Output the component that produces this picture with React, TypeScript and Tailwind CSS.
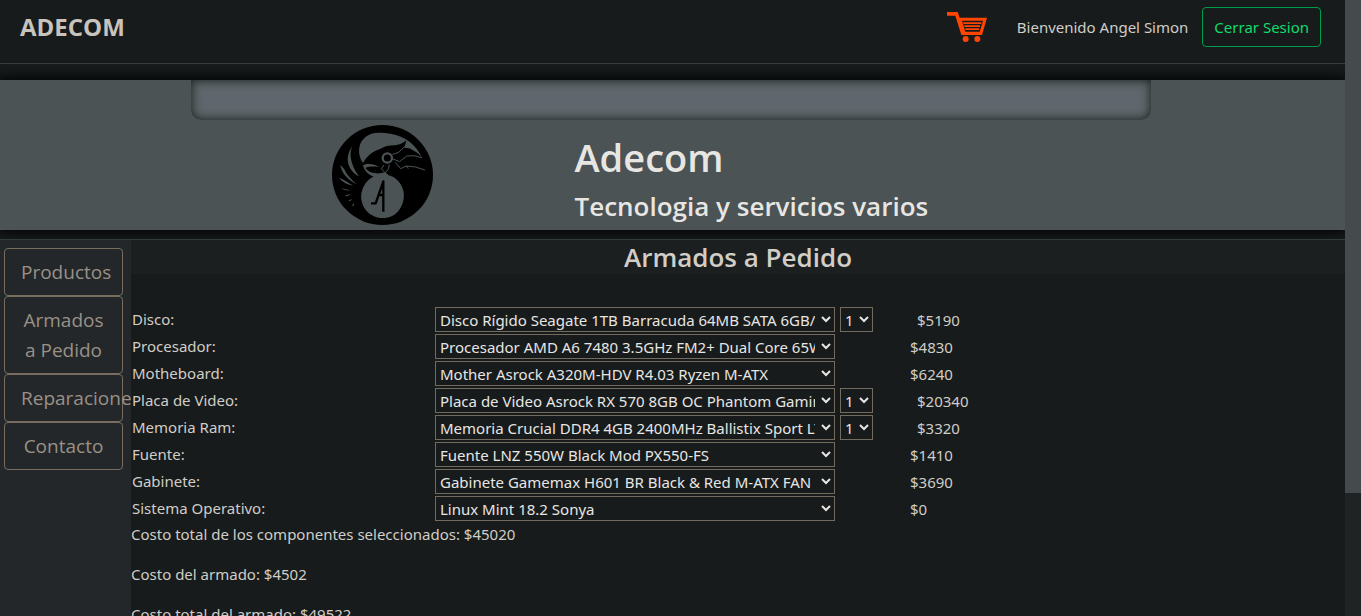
import React from "react";

type Part = { id: string; label: string; value: string; price: string; quantity?: boolean };

const parts: Part[] = [
  { id: "disco", label: "Disco:", value: "Disco Rígido Seagate 1TB Barracuda 64MB SATA 6GB/s", price: "$5190", quantity: true },
  { id: "procesador", label: "Procesador:", value: "Procesador AMD A6 7480 3.5GHz FM2+ Dual Core 65W", price: "$4830" },
  { id: "mother", label: "Motheboard:", value: "Mother Asrock A320M-HDV R4.03 Ryzen M-ATX", price: "$6240" },
  { id: "video", label: "Placa de Video:", value: "Placa de Video Asrock RX 570 8GB OC Phantom Gaming", price: "$20340", quantity: true },
  { id: "ram", label: "Memoria Ram:", value: "Memoria Crucial DDR4 4GB 2400MHz Ballistix Sport LT", price: "$3320", quantity: true },
  { id: "fuente", label: "Fuente:", value: "Fuente LNZ 550W Black Mod PX550-FS", price: "$1410" },
  { id: "gabinete", label: "Gabinete:", value: "Gabinete Gamemax H601 BR Black & Red M-ATX FAN", price: "$3690" },
  { id: "sistema", label: "Sistema Operativo:", value: "Linux Mint 18.2 Sonya", price: "$0" },
];

const links = ["Productos", "Armados a Pedido", "Reparaciones", "Contacto"];

function Cart() {
  return (
    <svg viewBox="0 0 120 90" className="h-[30px] w-10" fill="#ff4500" aria-hidden="true">
      <path d="M0 0H32L38 17H120L105 69H43L25 11H0Z M45 26L55 59H98L108 26Z" fillRule="evenodd" />
      <path d="M48 31H103V36H50Z M51 40H99V45H53Z M54 49H96V54H56Z" />
      <circle cx="56" cy="81" r="9" />
      <circle cx="91" cy="81" r="9" />
    </svg>
  );
}

function Logo() {
  return (
    <svg viewBox="6 8 303 300" className="h-[100px] w-[101px]" role="img" aria-label="Adecom">
      <ellipse cx="157.500" cy="158" rx="151.500" ry="150" fill="#000" />
      <g fill="#4b5355">
        <path d="M99 122C82 98 83 64 104 46C122 29 152 29 182 34C226 42 258 66 276 106C262 88 246 82 223 78L229 54C211 70 194 69 176 70C164 71 155 78 140 84C124 91 110 103 99 122Z" />
        <path d="M99 128C112 122 134 124 148 134C132 132 116 132 106 137C116 150 132 154 150 153L166 150L176 159C194 163 208 177 216 193C230 224 217 264 188 280C164 293 132 288 112 268C91 246 88 216 102 190C110 176 120 167 131 163C114 156 102 145 99 128Z" />
        <path d="M67 71C56 86 51 105 54 121C59 140 70 153 87 162C72 143 64 122 62 103C61 91 63 80 67 71Z" />
        <path d="M31 127C34 150 50 170 80 186C63 169 49 156 44 142Z" />
        <path d="M27 166C38 180 53 187 70 190C56 183 44 173 36 170Z" />
        <path d="M33 198C43 204 52 205 62 204L47 201Z M43 221L63 214L53 222Z M55 235L67 229L60 237Z M65 250L73 242L71 250Z" />
      </g>
      <path d="M187 98Q198 92 207 92Q217 78 231 76Q251 80 272 103Q246 97 230 102L209 118L190 110Z" fill="#000" />
      <path d="M187 96L206 90L224 73M189 110L209 118L230 101Q252 97 276 106M196 120L212 139L228 131Q256 131 285 143M162 128L154 139L166 152M178 126Q178 142 166 151M228 131L235 139" fill="none" stroke="#4b5355" strokeWidth="3" />
      <circle cx="172" cy="107" r="14" fill="#000" stroke="#4b5355" strokeWidth="7" />
      <path d="M123 243H137L160 177V268M144 218H160" fill="none" stroke="#000" strokeWidth="7" strokeLinejoin="round" />
    </svg>
  );
}

const selectClass = "h-[25px] border border-[#736b5e] bg-[#171b1c] pr-[3px] text-[15px] text-[#e8e6e3]";

export default function App() {
  return (
    <div className="flex h-screen overflow-hidden bg-[#171b1c] font-['Noto_Sans','Open_Sans',sans-serif] text-[15px] leading-6 text-[#d1cdc7]">
      <div className="min-w-0 flex-1 overflow-hidden">
        <nav className="flex h-16 items-center border-b border-[#373c3e] pr-6 pb-[9px] pl-5">
          <a href="#inicio" className="mr-auto font-['Open_Sans',sans-serif] text-[24px] font-bold text-[#c8c3bc]">ADECOM</a>
          <a href="#carrito" aria-label="Carrito" className="mr-[30px]"><Cart /></a>
          <span className="mr-[14px]">Bienvenido Angel Simon</span>
          <button type="button" className="h-10 rounded border border-[#009b4b] px-[11px] text-[#0fdc6c]">Cerrar Sesion</button>
        </nav>

        <header className="mt-4 h-[150px] bg-[#4b5355] pr-1 shadow-[0_0_12px_2px_#000]">
          <div className="mx-auto max-w-[960px]">
            <div className="h-10 rounded-b-[10px] bg-[#61676f] shadow-[inset_0_0_10px_1px_#222627,inset_0_0_16px_6px_#5c6667]" />
            <div className="grid grid-cols-[2fr_3fr]">
              <div className="flex justify-center pt-[5px]"><Logo /></div>
              <div className="pt-[13px] font-['Open_Sans',sans-serif] text-[#e8e6e3]">
                <h1 className="mb-2 text-[38px] leading-[48px] font-semibold">Adecom</h1>
                <h2 className="text-[26px] leading-[34px] font-semibold">Tecnologia y servicios varios</h2>
              </div>
            </div>
          </div>
        </header>

        <div className="mt-[9px] flex min-h-screen border-t border-[#333c3b]">
          <aside className="w-[131px] shrink-0 overflow-hidden bg-[#23272a] pt-2 pr-2 pl-1">
            <nav className="flex flex-col font-['Open_Sans',sans-serif]">
              {links.map((link) => (
                <a key={link} href={"#" + link.toLowerCase().replace(/ /g, "-")} className="rounded border border-[#786d5f] px-4 py-2 text-center text-[19px] leading-[30px] text-[#9a9186]">
                  {link}
                </a>
              ))}
            </nav>
          </aside>
          <main className="min-w-0 flex-1">
            <h2 className="bg-[#1b1f20] text-center font-['Open_Sans',sans-serif] text-[26px] leading-[34px] font-semibold">Armados a Pedido</h2>
            <table className="mt-8 w-full table-fixed">
              <colgroup>
                <col className="w-[303px]" />
                <col className="w-[475px]" />
                <col />
              </colgroup>
              <tbody>
                {parts.map((part) => (
                  <tr key={part.id} className="h-[27px]">
                    <td className="p-px align-top"><label htmlFor={part.id}>{part.label}</label></td>
                    <td className="p-px">
                      <div className="flex gap-[5px]">
                        <select id={part.id} className={selectClass + " w-[400px]"}>
                          <option>{part.value}</option>
                        </select>
                        {part.quantity && (
                          <select aria-label={"Cantidad " + part.label} className={selectClass + " w-[33px]"}>
                            <option>1</option>
                            <option>2</option>
                          </select>
                        )}
                      </div>
                    </td>
                    <td className={part.quantity ? "py-px pl-2" : "p-px"}>{part.price}</td>
                  </tr>
                ))}
              </tbody>
            </table>
            <p className="mb-4">Costo total de los componentes seleccionados: $45020</p>
            <p className="mb-4">Costo del armado: $4502</p>
            <p>Costo total del armado: $49522</p>
          </main>
        </div>
      </div>
      <div className="w-4 shrink-0 bg-[#1f2324]" aria-hidden="true">
        <div className="h-4/5 bg-[#454a4d]" />
      </div>
    </div>
  );
}
